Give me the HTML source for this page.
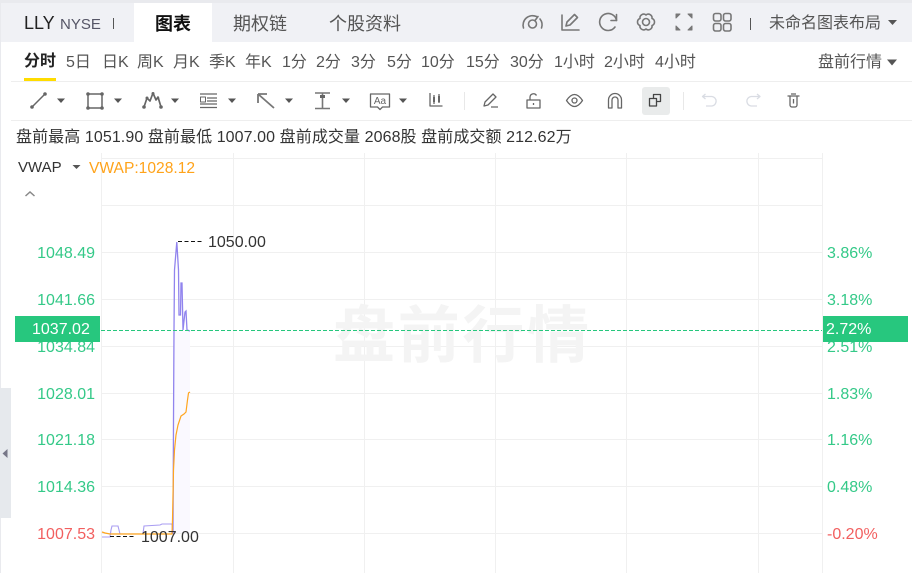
<!DOCTYPE html>
<html><head><meta charset="utf-8">
<style>
html,body{margin:0;padding:0;background:#fff}
#p{position:relative;width:912px;height:573px;overflow:hidden;background:#fff;font-family:"Liberation Sans","Noto Sans CJK SC",sans-serif;font-size:16px;color:#555}
#p div{position:absolute;white-space:nowrap}
.t{line-height:20px;height:20px}
.d{color:#333}
.l{color:#34c988;right:817px}
.r{color:#34c988;left:827px}
svg{position:absolute;left:0;top:0}
</style></head><body>
<div id="p">
<div style="left:0;top:0;width:912px;height:3px;background:#e9eaee"></div>
<div style="left:0;top:3px;width:912px;height:39px;background:#f0f1f5"></div>
<div style="left:0;top:0;width:1px;height:573px;background:#e9eaee"></div>
<div style="left:134px;top:3px;width:78px;height:39px;background:#fff"></div>
<div class="t" style="left:24px;top:13px;font-size:18px;color:#222">LLY</div>
<div class="t" style="left:60px;top:15px;font-size:15px;color:#556">NYSE</div>
<div style="left:113px;top:18px;width:1px;height:11px;background:#555"></div>
<div class="t" style="left:155px;top:14px;font-size:18px;font-weight:bold;color:#111">图表</div>
<div class="t" style="left:233px;top:14px;font-size:18px">期权链</div>
<div class="t" style="left:329px;top:14px;font-size:18px">个股资料</div>
<div style="left:750px;top:18px;width:1px;height:12px;background:#555"></div>
<div class="t" style="left:769px;top:14px">未命名图表布局</div>

<div class="t" style="left:24px;top:52px;font-weight:bold;color:#222">分时</div>
<div style="left:24px;top:78px;width:32px;height:3px;background:#ffdc00"></div>
<div class="t" style="left:66px;top:53px">5日</div>
<div class="t" style="left:102px;top:53px">日K</div>
<div class="t" style="left:137px;top:53px">周K</div>
<div class="t" style="left:173px;top:53px">月K</div>
<div class="t" style="left:209px;top:53px">季K</div>
<div class="t" style="left:245px;top:53px">年K</div>
<div class="t" style="left:282px;top:53px">1分</div>
<div class="t" style="left:316px;top:53px">2分</div>
<div class="t" style="left:351px;top:53px">3分</div>
<div class="t" style="left:387px;top:53px">5分</div>
<div class="t" style="left:421px;top:53px">10分</div>
<div class="t" style="left:466px;top:53px">15分</div>
<div class="t" style="left:510px;top:53px">30分</div>
<div class="t" style="left:554px;top:53px">1小时</div>
<div class="t" style="left:604px;top:53px">2小时</div>
<div class="t" style="left:655px;top:53px">4小时</div>
<div class="t" style="left:818px;top:53px">盘前行情</div>
<div style="left:11px;top:81px;width:901px;height:1px;background:#eeeeee"></div>
<div style="left:11px;top:120px;width:901px;height:1px;background:#eeeeee"></div>
<div style="left:642px;top:87px;width:28px;height:28px;border-radius:3px;background:#e9ebeb"></div>
<div style="left:464px;top:92px;width:1px;height:18px;background:#e8e8e8"></div>
<div style="left:683px;top:92px;width:1px;height:18px;background:#e8e8e8"></div>

<div class="t d" style="left:16px;top:128px;letter-spacing:.085px">盘前最高 1051.90 盘前最低 1007.00 盘前成交量 2068股 盘前成交额 212.62万</div>

<div style="left:0;top:388px;width:11px;height:130px;background:#e6e9ed"></div>

<svg width="912" height="573" viewBox="0 0 912 573">
<!-- grid -->
<g stroke="#f0f0f0" stroke-width="1" fill="none" shape-rendering="crispEdges">
<path d="M101 158.500H822M101 205.500H822M101 252.500H822M101 299.500H822M101 346.500H822M101 393.500H822M101 439.500H822M101 486.500H822M101 533.500H822"/>
<path d="M101.500 153V573M233.500 153V573M364.500 153V573M495.500 153V573M626.500 153V573M758.500 153V573M822.500 153V573"/>
</g>
<!-- carets -->
<g fill="#555">
<path d="M888 20l9 0-4.500 5z"/><path d="M887 59.500h10l-5 6z"/>
<path d="M57 98.500h8l-4 4.500z"/><path d="M114 98.500h8l-4 4.500z"/><path d="M171 98.500h8l-4 4.500z"/><path d="M228 98.500h8l-4 4.500z"/><path d="M285 98.500h8l-4 4.500z"/><path d="M342 98.500h8l-4 4.500z"/><path d="M399 98.500h8l-4 4.500z"/>
<path d="M72.500 165h8l-4 4z"/>
<path d="M7.500 449v9l-5-4.500z" fill="#778"/>
</g>
<path d="M25.500 196l4.500-4 4.500 4" fill="none" stroke="#888" stroke-width="1.500"/>
<!-- top icons -->
<g fill="none" stroke="#777" stroke-width="1.600" stroke-linecap="round" stroke-linejoin="round">
<path d="M523.500 28a9.500 9.500 0 0 1 13-11.500M540 19a9.500 9.500 0 0 1 1.500 9"/><circle cx="532.500" cy="24" r="4"/><path d="M535 20.500l3-4"/>
<path d="M562 15v15h17"/><path d="M566 26l1-4 7.500-7.500 3 3-7.500 7.500z"/>
<path d="M616.500 20.500a8.500 8.500 0 1 0-1.500 6.500"/><path d="M616.500 14.500v6h-5.500"/>
<path d="M646 15A3.700 3.700 0 0 1 652 18.500A3.700 3.700 0 0 1 652 25.500A3.700 3.700 0 0 1 646 29A3.700 3.700 0 0 1 640 25.500A3.700 3.700 0 0 1 640 18.500A3.700 3.700 0 0 1 646 15Z"/><circle cx="646" cy="22" r="3.500"/>
<path d="M676 18v-4h4l-4 4zM692 18v-4h-4l4 4zM676 26v4h4l-4-4zM692 26v4h-4l4-4z" fill="#777" stroke-width="1"/>
<rect x="713.500" y="13.500" width="7.500" height="7.500" rx="2"/><rect x="723.500" y="13.500" width="7.500" height="7.500" rx="2"/><rect x="713.500" y="23.500" width="7.500" height="7.500" rx="2"/><rect x="723.500" y="23.500" width="7.500" height="7.500" rx="2"/>
</g>
<!-- drawing tools -->
<g fill="none" stroke="#666" stroke-width="1.300" stroke-linejoin="round">
<path d="M32 107L45 94" stroke-width="1.500"/>
<path d="M88 94h14v14h-14z" stroke-width="1.500"/>
<path d="M144 107l3-9 3 3 3-8 3 7 2-3 3 10" stroke-width="1.700"/>
<path d="M200 94h17M207 98h10M207 101h10M200 104h17M200 107.500h17"/><rect x="200.500" y="97" width="5" height="5" stroke-width="1"/>
<path d="M258 94l16 14M258 94v9M258 94h9" stroke-width="1.800" stroke="#777"/>
<path d="M315 93h15M315 108.500h15M322.500 93v15.500" stroke-width="1.600" stroke="#777"/>
<path d="M370.500 94h19v13h-7l-2.500 2.500-2.500-2.500h-7z"/>
<path d="M430 93v13h12.500"/><path d="M434 95v9M439 94v9"/>
<path d="M484 106l1-4 8-8 3 3-8 8zM491 107h7"/>
<path d="M527 100h13v8h-13zM530 100v-3a3.500 3.500 0 0 1 6.500-1.500M533.500 103v2"/>
<path d="M566.500 100.500c3-4.500 6-6 8-6s5 1.500 8 6c-3 4.500-6 6-8 6s-5-1.500-8-6z"/><circle cx="574.500" cy="100.500" r="2.500"/>
<path d="M608.500 108v-8a6.500 6.500 0 0 1 13 0v8h-3.500v-8a3 3 0 0 0-6 0v8z"/>
<path d="M649.500 98.500h7v7.500h-7zM653.500 98.500v-4h7v7h-4" stroke="#444"/>
</g>
<text x="380" y="104" text-anchor="middle" font-family="Liberation Sans" font-size="10" fill="#666">Aa</text>
<g fill="#666" stroke="none">
<circle cx="32" cy="107" r="1.800"/><circle cx="45" cy="94" r="1.800"/>
<circle cx="88" cy="94" r="1.800"/><circle cx="102" cy="94" r="1.800"/><circle cx="88" cy="108" r="1.800"/><circle cx="102" cy="108" r="1.800"/>
<circle cx="144" cy="107" r="1.800"/><circle cx="161" cy="107" r="1.800"/><circle cx="147" cy="98" r="1.500"/><circle cx="153" cy="93.500" r="1.500"/><circle cx="158" cy="98" r="1.300"/>
<rect x="433" y="97" width="2" height="5"/><rect x="438" y="96" width="2" height="6"/>
<rect x="320" y="95" width="5" height="3"/>
</g>
<!-- undo/redo/trash -->
<g fill="none" stroke="#d9dce3" stroke-width="1.300" stroke-linejoin="round">
<path d="M705.500 94l-3 2.500 3 2.500M703 96.500h9a4.800 4.800 0 0 1 0 9.500h-6"/>
<path d="M760 96.500h-9a4.800 4.800 0 0 0 0 9.500h6M757 94l3 2.500-3 2.500"/>
</g>
<path d="M787.500 96h12M790 96v9a2 2 0 0 0 2 2h3a2 2 0 0 0 2-2v-9M791 94h5M793.500 99v4.500" fill="none" stroke="#666" stroke-width="1.300"/>
<!-- chart -->
<path d="M174 331H190V533H173.500z" fill="#faf9ff"/>
<polyline fill="none" stroke="#a99df2" stroke-width="1.100" points="102,537 110,537 111,530 112,526 118,526 120,534 143,534 144,526 160,525 162,524 172,524 173,534"/>
<polyline fill="none" stroke="#9184ee" stroke-width="1.300" points="173,534 173.500,420 174,330 174.500,270 176.800,242 178.500,270 179,315 180.500,315 181,283 182,283 183,330 185,312 186,311 187,330 190,331"/>
<polyline fill="none" stroke="#ffa51f" stroke-width="1.200" points="102,532 105,533 110,534 140,534 172,534 172.500,520 173.500,470 174.500,450 176,435 178,425 181,416 184,414 186,412 187.500,400 188.500,393 190,392"/>
<path d="M178 241.500H203" stroke="#111" stroke-width="1" stroke-dasharray="4 2.500" shape-rendering="crispEdges"/>
<path d="M110 536.500H135" stroke="#111" stroke-width="1" stroke-dasharray="4 2.500" shape-rendering="crispEdges"/>
</svg>

<div class="t" style="left:333px;top:305px;height:63px;line-height:63px;font-size:62px;font-weight:bold;color:#f4f4f4;letter-spacing:2.700px">盘前行情</div>
<svg width="912" height="573" viewBox="0 0 912 573"><path d="M101 330.500H822" stroke="#26c77d" stroke-width="1" stroke-dasharray="4 2" shape-rendering="crispEdges"/></svg>

<div class="t d" style="left:18px;top:158px;font-size:15px">VWAP</div>
<div class="t" style="left:89px;top:159px;font-size:15.600px;color:#ffa31a">VWAP:1028.12</div>
<div class="t d" style="left:208px;top:233px">1050.00</div>
<div class="t d" style="left:141px;top:528px">1007.00</div>

<div class="t l" style="top:244px">1048.49</div>
<div class="t l" style="top:291px">1041.66</div>
<div class="t l" style="top:338px">1034.84</div>
<div class="t l" style="top:385px">1028.01</div>
<div class="t l" style="top:431px">1021.18</div>
<div class="t l" style="top:478px">1014.36</div>
<div class="t l" style="top:525px;color:#f25f5f">1007.53</div>
<div class="t r" style="top:244px">3.86%</div>
<div class="t r" style="top:291px">3.18%</div>
<div class="t r" style="top:338px">2.51%</div>
<div class="t r" style="top:385px">1.83%</div>
<div class="t r" style="top:431px">1.16%</div>
<div class="t r" style="top:478px">0.48%</div>
<div class="t r" style="top:525px;color:#f25f5f">-0.20%</div>

<div style="left:15px;top:316px;width:85px;height:26px;background:#27c77e"></div>
<div class="t" style="left:32px;top:320px;color:#fff">1037.02</div>
<div style="left:823px;top:316px;width:85px;height:26px;background:#27c77e"></div>
<div class="t" style="left:826px;top:320px;color:#fff">2.72%</div>
</div>
</body></html>
